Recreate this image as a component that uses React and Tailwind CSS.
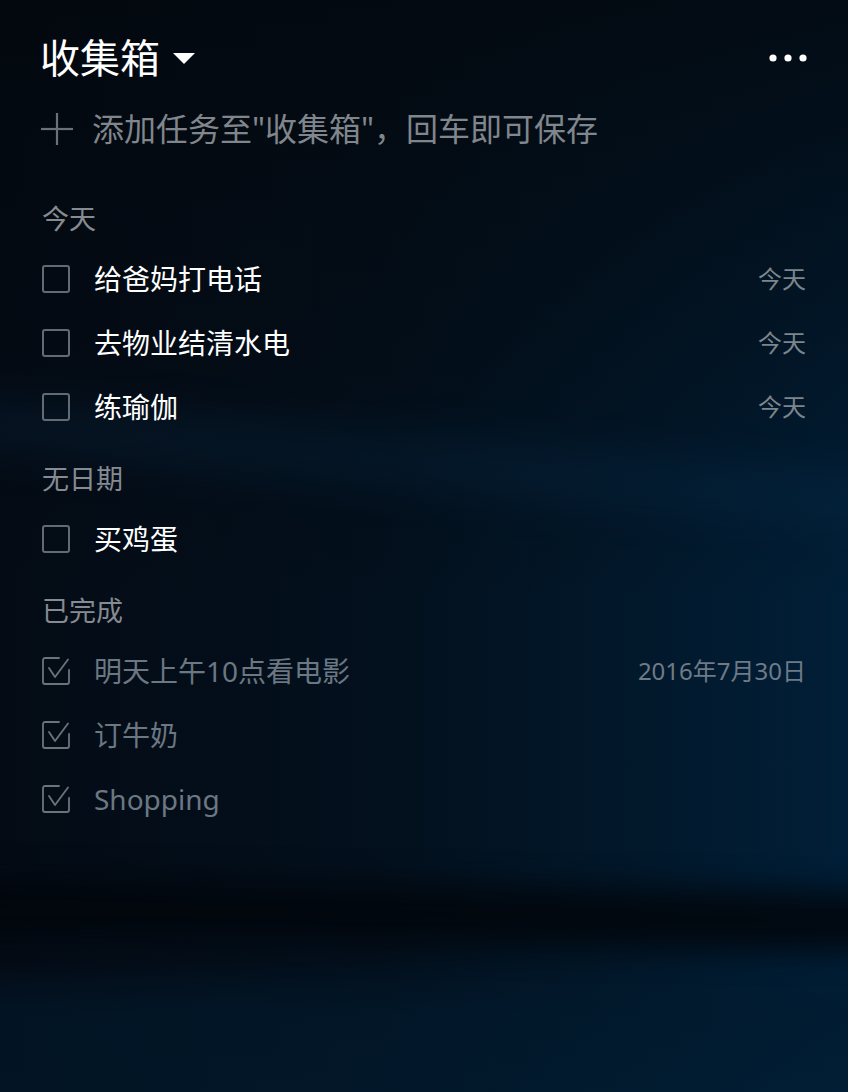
import React from 'react';

const FONT = "font-['Noto_Sans','Noto_Sans_CJK_SC',sans-serif]";

const sections = [
  {
    titulo: '今天',
    tareas: [
      { texto: '给爸妈打电话', fecha: '今天' },
      { texto: '去物业结清水电', fecha: '今天' },
      { texto: '练瑜伽', fecha: '今天' },
    ],
  },
  {
    titulo: '无日期',
    tareas: [{ texto: '买鸡蛋' }],
  },
  {
    titulo: '已完成',
    hecho: true,
    tareas: [
      { texto: '明天上午10点看电影', fecha: '2016年7月30日' },
      { texto: '订牛奶' },
      { texto: 'Shopping' },
    ],
  },
];

function Casilla({ hecho }) {
  if (hecho) {
    return (
      <svg width="28" height="28" viewBox="0 0 28 28" fill="none" stroke="#6b747c" strokeWidth="1.8" strokeLinecap="round" strokeLinejoin="round">
        <path d="M17 1H3a2 2 0 0 0-2 2v22a2 2 0 0 0 2 2h22a2 2 0 0 0 2-2V13" />
        <path d="M7 11l6 9L26 2.5" />
      </svg>
    );
  }
  return (
    <svg width="28" height="28" viewBox="0 0 28 28" fill="none">
      <rect x="1" y="1" width="26" height="26" rx="2" stroke="#626b73" strokeWidth="2" />
    </svg>
  );
}

export default function App() {
  return (
    <div className={`relative w-full h-[1092px] overflow-hidden bg-[#030c18] ${FONT}`}>
      {/* fondo */}
      <div className="absolute inset-0 bg-[linear-gradient(to_right,#040b15_0%,#03101d_45%,#02182b_75%,#011f38_100%)]" />
      <div className="absolute inset-0 bg-[linear-gradient(to_bottom,rgba(3,8,14,0.85)_0%,rgba(3,8,14,0.4)_30%,rgba(3,8,14,0)_55%)]" />
      <div className="absolute left-[-150px] top-[445px] w-[1200px] h-[40px] rotate-[5deg] rounded-full bg-[#0b3558] opacity-30 blur-xl" />
      <div className="absolute left-0 top-[960px] w-full h-[132px] bg-[linear-gradient(to_bottom,rgba(1,26,46,0)_0%,rgba(1,26,46,0.6)_40%,rgba(1,30,52,0.5)_100%)]" />
      <div className="absolute left-[-100px] top-[885px] w-[1100px] h-[60px] rotate-[1deg] bg-[#01060c] opacity-90 blur-lg" />

      <div className="relative flex flex-col pl-[42px] pr-[42px]">
        <div className="flex items-center justify-between h-12 mt-[34px]">
          <div className="flex items-center gap-[13px] -ml-[2px]">
            <span className="text-[40px] leading-none text-white">收集箱</span>
            <svg width="22" height="11" viewBox="0 0 22 11">
              <polygon points="0,0 22,0 11,11" fill="#ffffff" />
            </svg>
          </div>
          <svg width="40" height="10" viewBox="0 0 40 10" className="mr-[-3px]">
            <circle cx="4" cy="5" r="3.6" fill="#fff" />
            <circle cx="19" cy="5" r="3.6" fill="#fff" />
            <circle cx="34" cy="5" r="3.6" fill="#fff" />
          </svg>
        </div>

        <div className="flex items-center h-12 mt-[23px] -ml-[2px]">
          <svg width="34" height="34" viewBox="0 0 34 34" stroke="#6c7177" strokeWidth="2.2">
            <line x1="1" y1="17" x2="33" y2="17" />
            <line x1="17" y1="1" x2="17" y2="33" />
          </svg>
          <span className="ml-[18px] text-[32px] leading-none text-[#80868c]">添加任务至"收集箱"，回车即可保存</span>
        </div>

        {sections.map((sec, i) => (
          <div key={sec.titulo} className="flex flex-col">
            <div className={`flex items-center h-10 ${i === 0 ? 'mt-[45px]' : 'mt-[19px]'} mb-[9px] text-[27px] leading-none text-[#858b91]`}>
              {sec.titulo}
            </div>
            {sec.tareas.map(t => (
              <div key={t.texto} className="flex items-center h-16">
                <Casilla hecho={sec.hecho} />
                <span className={`ml-6 flex-1 text-[28px] leading-none ${sec.hecho ? 'text-[#6b7782]' : 'text-white'}`}>{t.texto}</span>
                {t.fecha && (
                  <span className={`text-[24px] leading-none ${sec.hecho ? 'text-[#6e7b87]' : 'text-[#7c858d]'}`}>{t.fecha}</span>
                )}
              </div>
            ))}
          </div>
        ))}
      </div>
    </div>
  );
}
